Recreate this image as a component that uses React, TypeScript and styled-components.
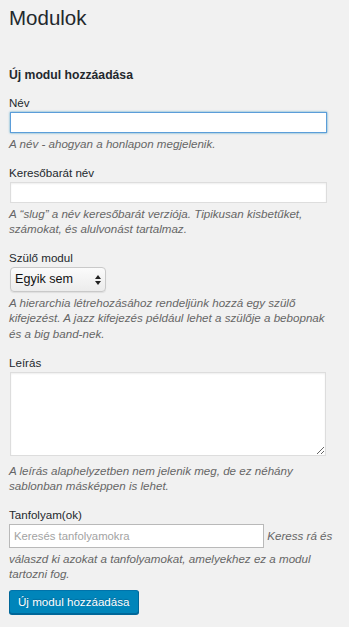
import styled, { createGlobalStyle } from "styled-components";

const GlobalStyle = createGlobalStyle`
	body {
		margin: 0;
		background: #f1f1f1;
		font-family: "Liberation Sans", Arial, sans-serif;
		color: #23282d;
	}
`;

const Page = styled.div`
	box-sizing: border-box;
	width: 349px;
	padding: 5px 8px 20px 9px;
`;

const Title = styled.h1`
	margin: 0;
	font-size: 20.5px;
	line-height: 26px;
	font-weight: 400;
	color: #23282d;
`;

const FormHeading = styled.h2`
	margin: 36px 0 0;
	font-size: 12.2px;
	line-height: 16px;
	font-weight: 700;
`;

const Field = styled.div<{ $gap: number }>`
	margin-top: ${({ $gap }) => $gap}px;
`;

const Label = styled.label`
	display: block;
	font-size: 11.6px;
	line-height: 16px;
	margin-bottom: 1px;
`;

const TextInput = styled.input<{ $active?: boolean }>`
	display: block;
	box-sizing: border-box;
	width: 317px;
	height: 21px;
	margin: 0 0 0 1px;
	padding: 0 6px;
	background: #fff;
	border: 1px solid ${({ $active }) => ($active ? "#5b9dd9" : "#ddd")};
	box-shadow: ${({ $active }) =>
		$active ? "0 0 2px rgba(30, 140, 190, 0.8)" : "inset 0 1px 2px rgba(0, 0, 0, 0.07)"};
	font: 11.6px "Liberation Sans", Arial, sans-serif;
	outline: none;
`;

const TextArea = styled.textarea`
	display: block;
	box-sizing: border-box;
	width: 316px;
	height: 84px;
	margin: 1px 0 0 1px;
	background: #fff;
	border: 1px solid #ddd;
	box-shadow: inset 0 1px 2px rgba(0, 0, 0, 0.07);
	font: 11.6px "Liberation Sans", Arial, sans-serif;
	outline: none;
`;

const Hint = styled.p<{ $gap?: number }>`
	margin: ${({ $gap = 3 }) => $gap}px 0 0;
	font-size: 11.6px;
	line-height: 15.6px;
	font-style: italic;
	color: #666;
`;

const SelectWrap = styled.div`
	position: relative;
	display: block;
	width: 96px;
	height: 25px;
	margin-left: 1px;
`;

const Select = styled.select`
	appearance: none;
	-webkit-appearance: none;
	box-sizing: border-box;
	width: 100%;
	height: 100%;
	padding: 0 16px 0 4px;
	border: 1px solid #c9c9c9;
	border-radius: 4px;
	background: linear-gradient(#fbfbfb, #ececec);
	box-shadow: 0 1px 1px rgba(0, 0, 0, 0.08);
	font: 12.6px "Liberation Sans", Arial, sans-serif;
	color: #111;
	outline: none;
`;

const SelectArrows = styled.svg`
	position: absolute;
	right: 5px;
	top: 8px;
	pointer-events: none;
`;

const CourseInput = styled.input`
	display: inline-block;
	box-sizing: border-box;
	width: 255px;
	height: 24px;
	margin: 0 0 3px;
	padding: 0 4px;
	vertical-align: baseline;
	background: #fff;
	border: 1px solid #b9b9b9;
	font: normal 11.3px "Liberation Sans", Arial, sans-serif;
	outline: none;

	&::placeholder {
		color: #a3a3a3;
	}
`;

const SubmitButton = styled.button`
	display: block;
	height: 24px;
	margin-top: 8px;
	padding: 0 8px;
	background: #0085ba;
	border: 1px solid;
	border-color: #0073aa #006799 #006799;
	border-radius: 3px;
	box-shadow: 0 1px 0 #006799;
	color: #fff;
	font: 11.6px "Liberation Sans", Arial, sans-serif;
	text-shadow: 0 -1px 1px #006799;
	cursor: pointer;
`;

export default function App() {
	return (
		<>
			<GlobalStyle />
			<Page>
				<Title>Modulok</Title>
				<FormHeading>Új modul hozzáadása</FormHeading>

				<Field $gap={12}>
					<Label htmlFor="tag-name">Név</Label>
					<TextInput id="tag-name" type="text" $active />
					<Hint>A név - ahogyan a honlapon megjelenik.</Hint>
				</Field>

				<Field $gap={13}>
					<Label htmlFor="tag-slug">Keresőbarát név</Label>
					<TextInput id="tag-slug" type="text" />
					<Hint>
						A “slug” a név keresőbarát verziója. Tipikusan kisbetűket,
						<br />
						számokat, és alulvonást tartalmaz.
					</Hint>
				</Field>

				<Field $gap={13}>
					<Label htmlFor="parent">Szülő modul</Label>
					<SelectWrap>
						<Select id="parent" defaultValue="none">
							<option value="none">Egyik sem</option>
						</Select>
						<SelectArrows width="6" height="10" viewBox="0 0 6 10">
							<path d="M0 4 L3 0 L6 4 Z M0 6 L3 10 L6 6 Z" fill="#222" />
						</SelectArrows>
					</SelectWrap>
					<Hint>
						A hierarchia létrehozásához rendeljünk hozzá egy szülő
						<br />
						kifejezést. A jazz kifejezés például lehet a szülője a bebopnak
						<br />
						és a big band-nek.
					</Hint>
				</Field>

				<Field $gap={13}>
					<Label htmlFor="tag-description">Leírás</Label>
					<TextArea id="tag-description" />
					<Hint $gap={7}>
						A leírás alaphelyzetben nem jelenik meg, de ez néhány
						<br />
						sablonban másképpen is lehet.
					</Hint>
				</Field>

				<Field $gap={13}>
					<Label htmlFor="courses">Tanfolyam(ok)</Label>
					<Hint $gap={0}>
						<CourseInput id="courses" type="text" placeholder="Keresés tanfolyamokra" /> Keress rá és
						<br />
						válaszd ki azokat a tanfolyamokat, amelyekhez ez a modul
						<br />
						tartozni fog.
					</Hint>
				</Field>

				<SubmitButton type="button">Új modul hozzáadása</SubmitButton>
			</Page>
		</>
	);
}
